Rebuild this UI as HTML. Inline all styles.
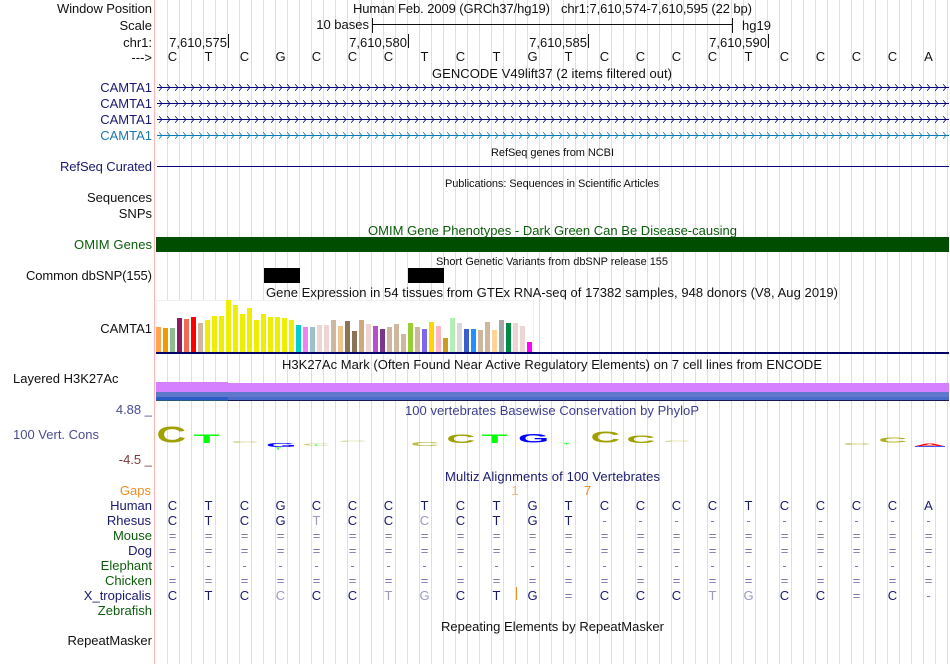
<!DOCTYPE html>
<html>
<head>
<meta charset="utf-8">
<title>Genome Browser</title>
<style>
html,body{margin:0;padding:0;background:#fff;width:950px;height:664px;overflow:hidden}
svg{display:block;font-family:"Liberation Sans",sans-serif;font-size:13px}
.r{text-anchor:end}
.m{text-anchor:middle}
.s{font-size:11px}
.n{fill:#191970}
.g{fill:#0b5d0b}
.f{fill:#9a9ac4}
.e{fill:#7878ac}
.l{font-weight:bold}
</style>
</head>
<body>
<svg width="950" height="664" viewBox="0 0 950 664" xmlns="http://www.w3.org/2000/svg">
<defs>
<pattern id="grid" x="167" y="0" width="12" height="664" patternUnits="userSpaceOnUse"><rect x="0" y="0" width="1" height="664" fill="#dcdcf4"/></pattern>
<pattern id="arr1" x="157.5" y="83.5" width="8" height="8" patternUnits="userSpaceOnUse"><path d="M1.7 0.8 L4.4 4 L1.7 7.2" fill="none" stroke="#000080" stroke-width="0.8"/></pattern>
<pattern id="arr2" x="157.5" y="131.5" width="8" height="8" patternUnits="userSpaceOnUse"><path d="M1.7 0.8 L4.4 4 L1.7 7.2" fill="none" stroke="#0a78b4" stroke-width="0.8"/></pattern>
</defs>
<rect width="950" height="664" fill="#fff"/>
<rect x="167" y="0" width="783" height="664" fill="url(#grid)"/>
<rect x="154" y="0" width="1" height="664" fill="#ffb4b4"/>

<!-- labels -->
<g class="r" fill="#111">
<text x="152" y="13" class="r" textLength="95">Window Position</text>
<text x="152" y="30" class="r">Scale</text>
<text x="152" y="47" class="r">chr1:</text>
<text x="152" y="62" class="r">---&gt;</text>
<text x="152" y="333" class="r">CAMTA1</text>
<text x="152" y="202" class="r">Sequences</text>
<text x="152" y="218" class="r">SNPs</text>
<text x="152" y="280" class="r" textLength="126">Common dbSNP(155)</text>
<text x="152" y="645" class="r">RepeatMasker</text>
</g>
<text x="13" y="383" fill="#111">Layered H3K27Ac</text>
<text x="13" y="439" fill="#4b4b93">100 Vert. Cons</text>
<text x="152" y="414" class="r" fill="#4b4b93">4.88 _</text>
<text x="152" y="464" class="r" fill="#7f3b3b">-4.5 _</text>
<text x="152" y="92" class="r n">CAMTA1</text>
<text x="152" y="108" class="r n">CAMTA1</text>
<text x="152" y="124" class="r n">CAMTA1</text>
<text x="152" y="140" class="r" fill="#1c78b0">CAMTA1</text>
<text x="152" y="171" class="r n" textLength="92">RefSeq Curated</text>
<text x="152" y="249" class="r g" textLength="78">OMIM Genes</text>
<text x="151" y="495" class="r" fill="#ee8c1e">Gaps</text>
<text x="152" y="510" class="r n">Human</text>
<text x="151" y="525" class="r n">Rhesus</text>
<text x="152" y="540" class="r g">Mouse</text>
<text x="152" y="555" class="r n">Dog</text>
<text x="152" y="570" class="r g">Elephant</text>
<text x="152" y="585" class="r g">Chicken</text>
<text x="151" y="600" class="r n">X_tropicalis</text>
<text x="152" y="615" class="r g">Zebrafish</text>

<!-- header -->
<text x="353" y="13" fill="#111" textLength="197">Human Feb. 2009 (GRCh37/hg19)</text>
<text x="561" y="13" fill="#111" textLength="191">chr1:7,610,574-7,610,595 (22 bp)</text>
<text x="369" y="29" class="r" fill="#111">10 bases</text>
<text x="742" y="30" fill="#111">hg19</text>
<path d="M372.5 18V33M372.5 24.5H732.5M732.5 18V33" stroke="#111" stroke-width="1" fill="none"/>
<text x="227" y="47" class="r" fill="#111">7,610,575</text>
<text x="407" y="47" class="r" fill="#111">7,610,580</text>
<text x="587" y="47" class="r" fill="#111">7,610,585</text>
<text x="767" y="47" class="r" fill="#111">7,610,590</text>
<path d="M228.5 34V48M408.5 34V48M588.5 34V48M768.5 34V48" stroke="#111" stroke-width="1"/>
<text y="61" class="m" fill="#111" x="172.5 208.5 244.5 280.5 316.5 352.5 388.5 424.5 460.5 496.5 532.5 568.5 604.5 640.5 676.5 712.5 748.5 784.5 820.5 856.5 892.5 928.5">CTCGCCCTCTGTCCCCTCCCCA</text>

<!-- centre labels -->
<text x="552" y="78" class="m" fill="#111" textLength="240">GENCODE V49lift37 (2 items filtered out)</text>
<text x="552.5" y="156" class="m s" fill="#111" textLength="123">RefSeq genes from NCBI</text>
<text x="552" y="187" class="m s" fill="#111" textLength="214">Publications: Sequences in Scientific Articles</text>
<text x="552.5" y="235" class="m g" textLength="369">OMIM Gene Phenotypes - Dark Green Can Be Disease-causing</text>
<text x="552" y="265" class="m s" fill="#111" textLength="232">Short Genetic Variants from dbSNP release 155</text>
<text x="552" y="297" class="m" fill="#111" textLength="572">Gene Expression in 54 tissues from GTEx RNA-seq of 17382 samples, 948 donors (V8, Aug 2019)</text>
<text x="552" y="369" class="m" fill="#111" textLength="540">H3K27Ac Mark (Often Found Near Active Regulatory Elements) on 7 cell lines from ENCODE</text>
<text x="552" y="415" class="m" fill="#3d3d8f" textLength="294">100 vertebrates Basewise Conservation by PhyloP</text>
<text x="552.5" y="481" class="m n" textLength="215">Multiz Alignments of 100 Vertebrates</text>
<text x="552.5" y="631" class="m" fill="#111" textLength="223">Repeating Elements by RepeatMasker</text>

<!-- gene arrows -->
<g fill="#000080">
<rect x="157" y="87" width="792" height="1"/>
<rect x="157" y="103" width="792" height="1"/>
<rect x="157" y="119" width="792" height="1"/>
<rect x="157" y="135" width="792" height="1" fill="#0a78b4"/>
</g>
<rect x="157" y="83" width="792" height="9" fill="url(#arr1)"/>
<g transform="translate(0,16)"><rect x="157" y="83" width="792" height="9" fill="url(#arr1)"/></g>
<g transform="translate(0,32)"><rect x="157" y="83" width="792" height="9" fill="url(#arr1)"/></g>
<rect x="157" y="131" width="792" height="9" fill="url(#arr2)"/>
<rect x="157" y="166" width="792" height="1" fill="#000080"/>

<rect x="156" y="237" width="793" height="15" fill="#004d00"/>
<rect x="264" y="268" width="36" height="15" fill="#000"/>
<rect x="408" y="268" width="36" height="15" fill="#000"/>

<!-- GTEx -->
<rect x="156.5" y="300.5" width="377" height="51" fill="#fff" stroke="#f0f0f4" stroke-width="1"/>
<g>
<rect x="156" y="327" width="5" height="25" fill="#ffa54f"/>
<rect x="163" y="328" width="5" height="24" fill="#ee9a00"/>
<rect x="170" y="328" width="5" height="24" fill="#8fbc8f"/>
<rect x="177" y="318" width="5" height="34" fill="#8b1c62"/>
<rect x="184" y="319" width="5" height="33" fill="#ee6a50"/>
<rect x="191" y="317" width="5" height="35" fill="#ff0000"/>
<rect x="198" y="323" width="5" height="29" fill="#cdb79e"/>
<rect x="205" y="320" width="5" height="32" fill="#eeee00"/>
<rect x="212" y="316" width="5" height="36" fill="#eeee00"/>
<rect x="219" y="316" width="5" height="36" fill="#eeee00"/>
<rect x="226" y="300" width="5" height="52" fill="#eeee00"/>
<rect x="233" y="305" width="5" height="47" fill="#eeee00"/>
<rect x="240" y="314" width="5" height="38" fill="#eeee00"/>
<rect x="247" y="308" width="5" height="44" fill="#eeee00"/>
<rect x="254" y="320" width="5" height="32" fill="#eeee00"/>
<rect x="261" y="314" width="5" height="38" fill="#eeee00"/>
<rect x="268" y="317" width="5" height="35" fill="#eeee00"/>
<rect x="275" y="317" width="5" height="35" fill="#eeee00"/>
<rect x="282" y="318" width="5" height="34" fill="#eeee00"/>
<rect x="289" y="320" width="5" height="32" fill="#eeee00"/>
<rect x="296" y="325" width="5" height="27" fill="#00cdcd"/>
<rect x="303" y="327" width="5" height="25" fill="#ee82ee"/>
<rect x="310" y="327" width="5" height="25" fill="#9ac0cd"/>
<rect x="317" y="325" width="5" height="27" fill="#eed5d2"/>
<rect x="324" y="325" width="5" height="27" fill="#eed5d2"/>
<rect x="331" y="320" width="5" height="32" fill="#cdb79e"/>
<rect x="338" y="326" width="5" height="26" fill="#eec591"/>
<rect x="345" y="321" width="5" height="31" fill="#8b7355"/>
<rect x="352" y="331" width="5" height="21" fill="#8b7355"/>
<rect x="359" y="320" width="5" height="32" fill="#cdaa7d"/>
<rect x="366" y="324" width="5" height="28" fill="#eed5d2"/>
<rect x="373" y="326" width="5" height="26" fill="#b452cd"/>
<rect x="380" y="329" width="5" height="23" fill="#7a378b"/>
<rect x="387" y="327" width="5" height="25" fill="#cdb79e"/>
<rect x="394" y="324" width="5" height="28" fill="#cdb79e"/>
<rect x="401" y="334" width="5" height="18" fill="#cdb79e"/>
<rect x="408" y="323" width="5" height="29" fill="#9acd32"/>
<rect x="415" y="327" width="5" height="25" fill="#cdb79e"/>
<rect x="422" y="329" width="5" height="23" fill="#7b68ee"/>
<rect x="429" y="322" width="5" height="30" fill="#ffd700"/>
<rect x="436" y="326" width="5" height="26" fill="#ffb6c1"/>
<rect x="443" y="338" width="5" height="14" fill="#cd9b1d"/>
<rect x="450" y="318" width="5" height="34" fill="#b4eeb4"/>
<rect x="457" y="323" width="5" height="29" fill="#d9d9d9"/>
<rect x="464" y="329" width="5" height="23" fill="#3a5fcd"/>
<rect x="471" y="329" width="5" height="23" fill="#1e90ff"/>
<rect x="478" y="330" width="5" height="22" fill="#cdb79e"/>
<rect x="485" y="322" width="5" height="30" fill="#cdb79e"/>
<rect x="492" y="330" width="5" height="22" fill="#ffd39b"/>
<rect x="499" y="320" width="5" height="32" fill="#a6a6a6"/>
<rect x="506" y="323" width="5" height="29" fill="#008b45"/>
<rect x="513" y="323" width="5" height="29" fill="#eed5d2"/>
<rect x="520" y="326" width="5" height="26" fill="#eed5d2"/>
<rect x="527" y="342" width="5" height="10" fill="#ff00ff"/>
</g>
<rect x="156" y="352" width="793" height="2" fill="#000066"/>

<!-- H3K27Ac -->
<rect x="156" y="383" width="793" height="9" fill="#d580ff"/>
<rect x="156" y="382" width="72" height="1" fill="#d580ff"/>
<rect x="156" y="392" width="793" height="5" fill="#6078cc"/>
<rect x="228" y="397" width="721" height="3" fill="#4a6ccc"/>
<rect x="156" y="397" width="72" height="3" fill="#2a5cc8"/>
<rect x="228" y="400" width="721" height="1" fill="#1a1a50"/>
<rect x="156" y="400" width="72" height="1" fill="#2a5878"/>

<!-- conservation logo -->
<g class="l" font-size="10">
<text transform="translate(156.5,442.5) scale(4.1,2.35)" fill="#a0a000">C</text>
<text transform="translate(193.5,443) scale(4.3,1.15)" fill="#00ff00">T</text>
<text transform="translate(231,443) scale(3.9,0.25)" fill="#a0a000" opacity="0.45">C</text>
<text transform="translate(266,447) scale(3.9,0.55)" fill="#0000ff">G</text>
<text transform="translate(275,449.5) scale(1,0.3)" fill="#00ff00">T</text>
<text transform="translate(302,445.5) scale(3.9,0.3)" fill="#a0a000" opacity="0.5">C</text>
<text transform="translate(314,446) scale(.7,0.2)" fill="#00ff00">T</text>
<text transform="translate(339,442) scale(3.9,0.2)" fill="#a0a000" opacity="0.45">C</text>
<text transform="translate(410.5,446) scale(4,0.55)" fill="#a0a000" opacity="0.7">C</text>
<text transform="translate(446.5,443.2) scale(4,1.15)" fill="#a0a000">C</text>
<text transform="translate(481.5,443) scale(4.3,1.15)" fill="#00ff00">T</text>
<text transform="translate(518,442.5) scale(4,1.2)" fill="#0000ff">G</text>
<text transform="translate(553.5,444) scale(4.3,.2)" fill="#00ff00" opacity="0.3">T</text>
<text transform="translate(564,444.5) scale(.8,.15)" fill="#00ff00">T</text>
<text transform="translate(590.5,442.5) scale(4.1,1.6)" fill="#a0a000">C</text>
<text transform="translate(626.5,443) scale(4,1.1)" fill="#a0a000">C</text>
<text transform="translate(663,442) scale(3.9,0.2)" fill="#a0a000" opacity="0.5">C</text>
<text transform="translate(843,445) scale(3.9,0.3)" fill="#a0a000" opacity="0.6">C</text>
<text transform="translate(878.5,442.5) scale(4,0.75)" fill="#a0a000" opacity="0.85">C</text>
<text transform="translate(914.5,446) scale(4.2,0.4)" fill="#ff0000">A</text>
<rect x="915" y="446" width="30" height="1" fill="#5050ff"/>
</g>

<!-- gaps -->
<text x="515" y="495" class="m" fill="#f5b070">1</text>
<text x="587.5" y="495" class="m" fill="#ee8c1e">7</text>
<rect x="516" y="587" width="1" height="13" fill="#ee8c1e"/>

<!-- alignment -->
<text y="510" class="m n" x="172.5 208.5 244.5 280.5 316.5 352.5 388.5 424.5 460.5 496.5 532.5 568.5 604.5 640.5 676.5 712.5 748.5 784.5 820.5 856.5 892.5 928.5">CTCGCCCTCTGTCCCCTCCCCA</text>

<g class="m">
<text y="525" class="m n" x="172.5 208.5 244.5 280.5">CTCG</text>
<text y="525" class="m f" x="316.5">T</text>
<text y="525" class="m n" x="352.5 388.5">CC</text>
<text y="525" class="m f" x="424.5">C</text>
<text y="525" class="m n" x="460.5 496.5 532.5 568.5">CTGT</text>
<text y="525" class="m e" x="604.5 640.5 676.5 712.5 748.5 784.5 820.5 856.5 892.5 928.5">----------</text>

<text y="540" class="m e" x="172.5 208.5 244.5 280.5 316.5 352.5 388.5 424.5 460.5 496.5 532.5 568.5 604.5 640.5 676.5 712.5 748.5 784.5 820.5 856.5 892.5 928.5">======================</text>
<text y="555" class="m e" x="172.5 208.5 244.5 280.5 316.5 352.5 388.5 424.5 460.5 496.5 532.5 568.5 604.5 640.5 676.5 712.5 748.5 784.5 820.5 856.5 892.5 928.5">======================</text>
<text y="570" class="m e" x="172.5 208.5 244.5 280.5 316.5 352.5 388.5 424.5 460.5 496.5 532.5 568.5 604.5 640.5 676.5 712.5 748.5 784.5 820.5 856.5 892.5 928.5">----------------------</text>
<text y="585" class="m e" x="172.5 208.5 244.5 280.5 316.5 352.5 388.5 424.5 460.5 496.5 532.5 568.5 604.5 640.5 676.5 712.5 748.5 784.5 820.5 856.5 892.5 928.5">======================</text>

<text y="600" class="m n" x="172.5 208.5 244.5">CTC</text>
<text y="600" class="m f" x="280.5">C</text>
<text y="600" class="m n" x="316.5 352.5">CC</text>
<text y="600" class="m f" x="388.5 424.5">TG</text>
<text y="600" class="m n" x="460.5 496.5 532.5">CTG</text>
<text y="600" class="m e" x="568.5">=</text>
<text y="600" class="m n" x="604.5 640.5 676.5">CCC</text>
<text y="600" class="m f" x="712.5 748.5">TG</text>
<text y="600" class="m n" x="784.5 820.5">CC</text>
<text y="600" class="m e" x="856.5">=</text>
<text y="600" class="m n" x="892.5">C</text>
<text y="600" class="m e" x="928.5">-</text>
</g>
</svg>
</body>
</html>
